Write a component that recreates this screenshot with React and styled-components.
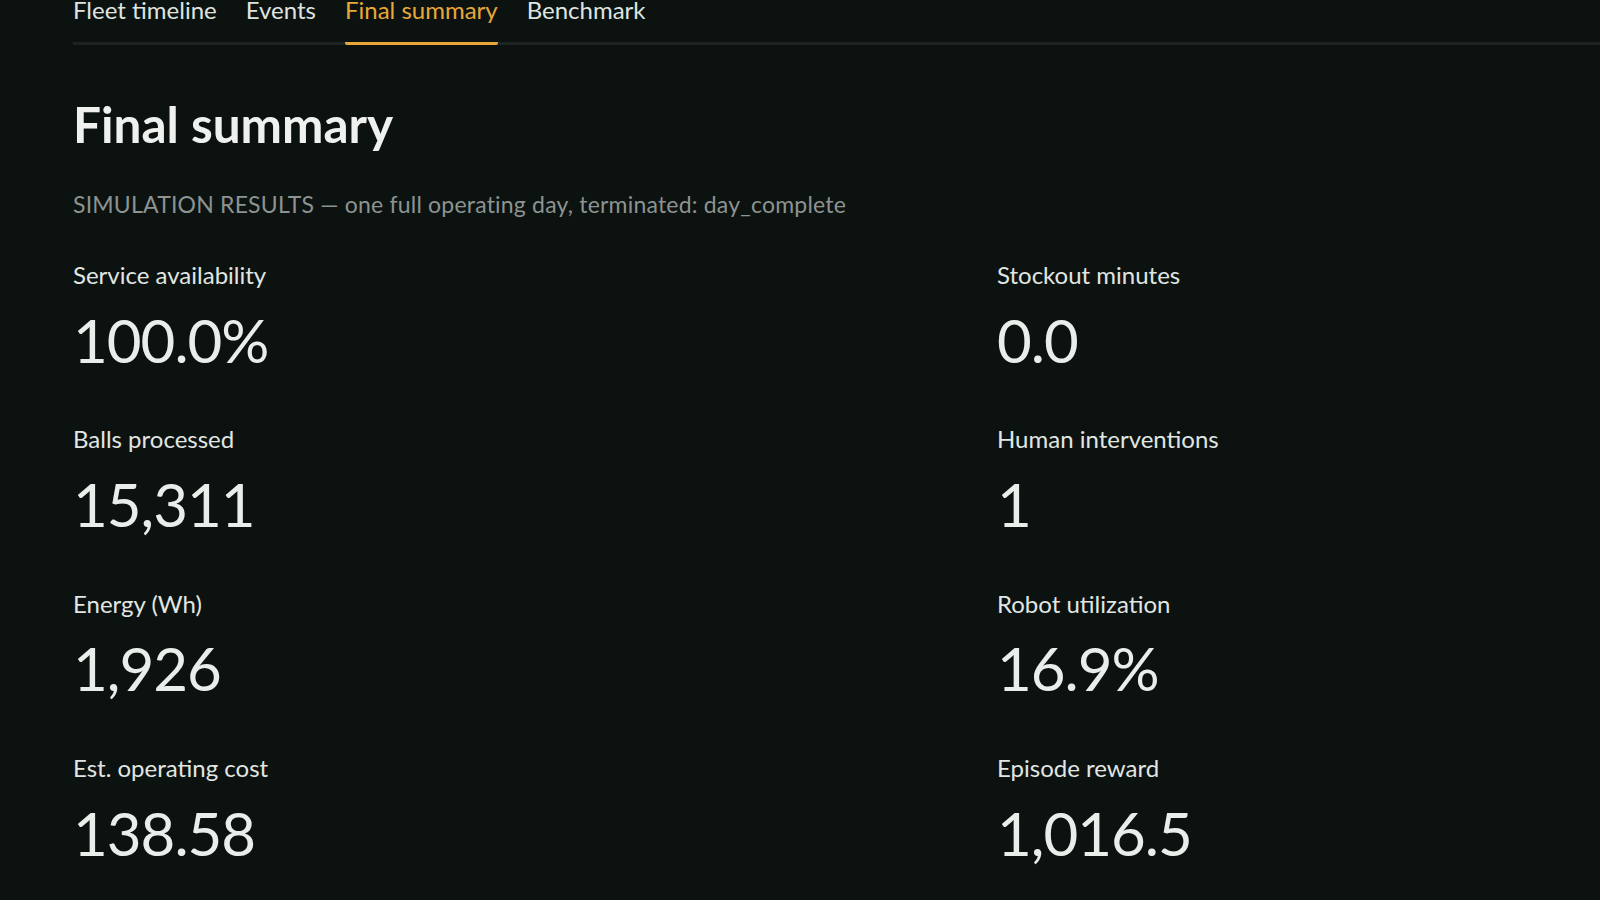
import React from "react";
import styled, { createGlobalStyle } from "styled-components";

const GlobalStyle = createGlobalStyle`
  html, body {
    margin: 0;
    padding: 0;
    background: #0b1210;
  }
  body {
    font-family: Lato, "Noto Sans", "Liberation Sans", sans-serif;
    color: #e6ebe7;
    -webkit-font-smoothing: antialiased;
  }
`;

const Page = styled.div`
  height: 900px;
  overflow: hidden;
  padding-left: 73px;
  box-sizing: border-box;
`;

const TabBar = styled.nav`
  display: flex;
  gap: 29px;
  margin-top: -5px;
  border-bottom: 3px solid #1c2320;
`;

const Tab = styled.div`
  font-size: 24px;
  line-height: 30px;
  padding-bottom: 17px;
  margin-bottom: -3px;
  color: ${(p) => (p.$active ? "#e8a838" : "#dfe4e0")};
  border-bottom: 3px solid ${(p) => (p.$active ? "#e8a838" : "transparent")};
  border-radius: 0 0 2px 2px;
  cursor: pointer;
`;

const Heading = styled.h1`
  margin: 50px 0 0;
  font-size: 49.5px;
  line-height: 1.2;
  font-weight: 700;
  color: #eef1ee;
`;

const Subtitle = styled.p`
  margin: 37px 0 0;
  font-size: 23px;
  letter-spacing: 0.2px;
  line-height: 1.2;
  color: #8d9390;
`;

const Grid = styled.div`
  display: grid;
  grid-template-columns: 924px 1fr;
  row-gap: 49.5px;
  margin-top: 42px;
`;

const Stat = styled.div`
  display: flex;
  flex-direction: column;
  gap: 14px;
`;

const Label = styled.div`
  font-size: 24px;
  line-height: 1.2;
  color: #e1e6e2;
`;

const Value = styled.div`
  font-size: 60px;
  letter-spacing: -1px;
  line-height: 1.2;
  color: #e9eeea;
`;

const tabs = ["Fleet timeline", "Events", "Final summary", "Benchmark"];

const stats = [
  ["Service availability", "100.0%"],
  ["Stockout minutes", "0.0"],
  ["Balls processed", "15,311"],
  ["Human interventions", "1"],
  ["Energy (Wh)", "1,926"],
  ["Robot utilization", "16.9%"],
  ["Est. operating cost", "138.58"],
  ["Episode reward", "1,016.5"],
];

export default function App() {
  return (
    <>
      <GlobalStyle />
      <Page>
        <TabBar>
          {tabs.map((t) => (
            <Tab key={t} $active={t === "Final summary"}>
              {t}
            </Tab>
          ))}
        </TabBar>
        <Heading>Final summary</Heading>
        <Subtitle>
          SIMULATION RESULTS — one full operating day, terminated: day_complete
        </Subtitle>
        <Grid>
          {stats.map(([label, value]) => (
            <Stat key={label}>
              <Label>{label}</Label>
              <Value>{value}</Value>
            </Stat>
          ))}
        </Grid>
      </Page>
    </>
  );
}
